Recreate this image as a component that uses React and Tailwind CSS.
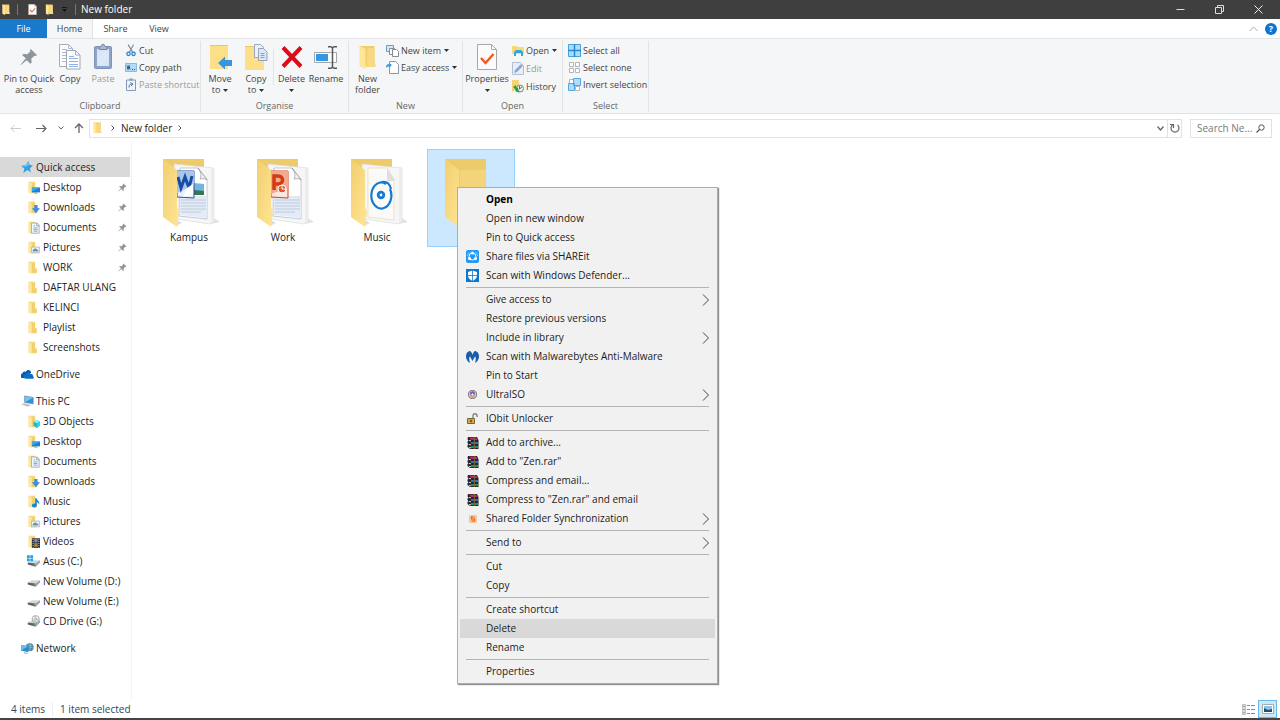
import React from "react";

const FOLDER_TABS = ["Home", "Share", "View"];

function Svg({ w, h, vb, children, className = "" }) {
  return (
    <svg width={w} height={h} viewBox={vb} fill="none" aria-hidden="true" className={`shrink-0 ${className}`}>
      {children}
    </svg>
  );
}

/* ---------- small icons, drawn on a 16 unit grid ---------- */

const folderBase = (
  <>
    <path d="M2 1h8v13H5L2 15z" fill="#f6d67a" />
    <path d="M2 1l4 2v13l-4-2z" fill="#fbe7a3" />
    <path d="M9 9h3v6H6V3h4z" fill="#f3cf6b" />
  </>
);

const overlays = {
  plain: null,
  desktop: (
    <>
      <path d="M6 8h10v6H6z" fill="#1583d8" />
      <path d="M6 8h10L6 13z" fill="#36a9ee" />
      <path d="M9 15h4" stroke="#67a8d6" />
    </>
  ),
  downloads: <path d="M9 5h4v4h3l-5 6-5-6h3z" fill="#3a8fdc" />,
  documents: (
    <>
      <path d="M5.500 2.500h7l2.500 2.500v10H5.500z" fill="#f5f8fb" stroke="#94a6b5" />
      <path d="M12 2.500V6h3M8 6h2M8 8.500h5M8 10.500h5M8 12.500h5" stroke="#6699c4" />
    </>
  ),
  pictures: (
    <>
      <path d="M5.500 7.500h10v7h-10z" fill="#eef4f8" stroke="#aab5bd" />
      <path d="M7 13v-2l3-2 4 2v2z" fill="#6895ae" />
    </>
  ),
  objects: (
    <>
      <path d="M12 6l4 2v5l-4 3-4-3V8z" fill="#18b8cf" />
      <path d="M12 6l4 2-4 2-4-2z" fill="#a2ecf2" />
      <path d="M12 10l4-2v5l-4 3z" fill="#35d2dd" />
    </>
  ),
  music: (
    <>
      <ellipse cx="9" cy="13" rx="3" ry="2.500" fill="#1389dc" />
      <path d="M10 13V4h2c0 3 4 3 3 8-1-2-2-3-3-3v4z" fill="#1389dc" />
    </>
  ),
  videos: (
    <>
      <path d="M6 4h10v12H6z" fill="#333" />
      <path d="M9 5h4v4H9z" fill="#6c8fca" />
      <path d="M9 10h4v5H9z" fill="#a68548" />
      <path d="M7.500 5v11M14.500 5v11" stroke="#eee" strokeDasharray="1 1.500" />
    </>
  ),
};

function FolderIcon({ kind = "plain" }) {
  return (
    <Svg w="13" h="13" vb="0 0 16 16">
      {folderBase}
      {overlays[kind]}
    </Svg>
  );
}

function DriveIcon({ kind }) {
  return (
    <Svg w="13" h="12" vb="0 0 18 16">
      <path d="M1 10l6-3h11l-6 4z" fill="#d5d7d8" />
      <path d="M1 10l11 1.500V16L1 13z" fill="#5d6265" />
      <path d="M12 11l6-4v3l-6 6z" fill="#9ea3a6" />
      <path d="M9 13.500h2" stroke="#7ee08a" />
      {kind === "windows" && <path d="M0 0h3.800v3.800H0zM4.600 0h3.800v3.800H4.600zM0 4.600h3.800v3.800H0zM4.600 4.600h3.800v3.800H4.600z" fill="#18a5e8" />}
      {kind === "cd" && (
        <>
          <circle cx="12" cy="5.500" r="5" fill="#d7dadc" stroke="#94999c" />
          <path d="M8 3l4 3 3-4" stroke="#fff" strokeWidth="1.500" />
          <circle cx="12" cy="5.500" r="1.500" fill="#fff" stroke="#888" />
        </>
      )}
    </Svg>
  );
}

const StarIcon = () => (
  <Svg w="12" h="12" vb="0 0 16 16">
    <path d="M10 0l1.500 5L16 6l-4 3.500 1 5.500-4.500-3L3 16l1.500-6L0 6.500l6-1z" fill="#319fe3" />
    <path d="M10 0l1.500 5-5 3-6.500-1.500 6-1z" fill="#68bff1" />
  </Svg>
);

const CloudIcon = () => (
  <Svg w="13" h="11" vb="0 0 18 14">
    <path d="M1 12a3.500 3.500 0 0 1 1-6.500C2 3 5 2 6.500 3.500 9-1 14 1 14 5L7 7l-2 5z" fill="#0b5cad" />
    <path d="M7 13a3 3 0 0 1-.5-6C7.500 3.500 12 3 13.500 6.500 16 6 17 8 16.500 9c2 1 1.500 4-.5 4z" fill="#0c6fc7" />
  </Svg>
);

const PcIcon = () => (
  <Svg w="13" h="12" vb="0 0 18 16">
    <path d="M5 1l12 2v9L5 10z" fill="#2c91d7" />
    <path d="M5 1l12 2L5 10z" fill="#75c3f0" />
    <path d="M5 1v9l12 2V3z" stroke="#7d9db5" />
    <path d="M0 12l5-1 9 3-5 2z" fill="#b7c4ce" />
  </Svg>
);

const NetworkIcon = () => (
  <Svg w="13" h="12" vb="0 0 18 16">
    <circle cx="12" cy="7" r="5.500" fill="#4787aa" />
    <path d="M9 3l4 2 3-1M12 7l5 1M13 2l-1 10" stroke="#92c9df" />
    <path d="M0 4l10 1.500V14L0 11.500z" fill="#278dd6" />
    <path d="M0 4l10 1.500L0 11.500z" fill="#69bcef" />
    <path d="M4 14.500l5 1" stroke="#89a7b7" strokeWidth="1.500" />
  </Svg>
);

function PinShape({ size }) {
  return (
    <Svg w={size} h={size} vb="0 0 20 20">
      <path d="M12 1l7 7-2 1-1-.5-3.500 3.500.5 4-1.500 1.500-4-4L1 19l-.5-.5 6-7-4-3.500L4 6.500l4 .5L11.500 4 11 2.500z" fill="#8c969c" />
    </Svg>
  );
}

/* ---------- ribbon icons ---------- */

const CheckDoc = ({ w, h }) => (
  <Svg w={w} h={h} vb="0 0 20 26">
    <path d="M.5.500h14l5 5v20H.500z" fill="#fbfbfc" stroke="#a5a8ac" />
    <path d="M14.500.500v5h5" stroke="#a5a8ac" />
    <path d="M4 14l4.500 5 8-9" stroke="#ef5a24" strokeWidth="2.500" />
  </Svg>
);

const CopyBig = () => (
  <Svg w="22" h="26" vb="0 0 22 26">
    <path d="M.500.500h9l4 4v18H.500z" fill="#fbfcfe" stroke="#a8adb3" />
    <path d="M9.500.500v4h4M3 5.500h5M3 8.500h8M3 11.500h8M3 14.500h8M3 17.500h8" stroke="#a9bddb" />
    <path d="M7.500 6.500h9l4.500 4.500v14H7.500z" fill="#fbfcfe" stroke="#a0a6ad" />
    <path d="M16.500 6.500v4.500H21M10 12.500h5M10 14.500h9M10 17.500h9M10 20.500h9M10 22.500h9" stroke="#90afe0" />
  </Svg>
);

const PasteBig = () => (
  <Svg w="18" h="26" vb="0 0 18 26">
    <rect x=".5" y="2.500" width="17" height="22" rx="1" fill="#8fa4c6" stroke="#7f95b8" />
    <path d="M3 5h12v17H3z" fill="#d9e6f8" />
    <path d="M5 2.500h2l1-2h2l1 2h2v3H5z" fill="#a9b8cd" stroke="#7689a5" />
    <path d="M4 18l8-10M6 20l9-11" stroke="#e8f0fb" />
  </Svg>
);

const ScissorsIcon = () => (
  <Svg w="10" h="13" vb="0 0 12 14">
    <path d="M2.500 0L8 9M9 0L4 9" stroke="#808b96" strokeWidth="1.400" />
    <circle cx="3" cy="11" r="2" stroke="#2482ca" strokeWidth="1.500" />
    <circle cx="9" cy="11" r="2" stroke="#2482ca" strokeWidth="1.500" />
  </Svg>
);

const CopyPathIcon = () => (
  <Svg w="12" h="9" vb="0 0 12 9">
    <path d="M.5.500h11v8H.500z" fill="#b5daf4" stroke="#8bbbdc" />
    <path d="M2 2.500l1 4 1-4 1 4M7 6.500h1M9 6.500h1" stroke="#205d91" />
  </Svg>
);

const PasteShortcutIcon = () => (
  <Svg w="10" h="13" vb="0 0 10 13">
    <path d="M.5 2h9v10.500h-9z" fill="#eef3fa" stroke="#8599b5" />
    <path d="M3 .500h4v2H3z" fill="#8ea2be" />
    <path d="M3 9.500c0-3 1-3.500 3.500-3.500M4.500 4.500L7 6 5 8" stroke="#5877a5" />
  </Svg>
);

const MoveIcon = () => (
  <Svg w="23" h="27" vb="0 0 23 27">
    <path d="M1 1h18v24H1z" fill="#fcdf86" />
    <path d="M1 1h18v1H1z" fill="#eac667" />
    <path d="M9 19l7-6.500V16h7v6h-7v3.500z" fill="#3596e3" />
  </Svg>
);

const CopyToIcon = () => (
  <Svg w="23" h="27" vb="0 0 23 27">
    <path d="M0 2h19v24H0z" fill="#fcdf86" />
    <path d="M0 2h10v1H0z" fill="#eac667" />
    <path d="M9.500.500h6l3 3v10h-9z" fill="#e9f1fb" stroke="#9aa9bd" />
    <path d="M13.500 4.500h5l3.500 3.500v8.500h-8.500z" fill="#dce8f8" stroke="#92a3b9" />
    <path d="M15.500 9.500h4M15.500 11.500h4M15.500 13.500h4" stroke="#7da4da" />
  </Svg>
);

const DeleteIcon = () => (
  <Svg w="22" h="22" vb="0 0 22 22">
    <path d="M2 1.500L20 20.500M20 1.500L2 20.500" stroke="#dc0d17" strokeWidth="4" />
  </Svg>
);

const RenameIcon = () => (
  <Svg w="24" h="23" vb="0 0 24 23">
    <path d="M.500 6.500h22v10H.500z" fill="#fff" stroke="#a1a6aa" />
    <path d="M2 8h12v7H2z" fill="#3297e5" />
    <path d="M14 .750h3l1.500 1 1.500-1h3M18.500 1.500v20M14 22.250h3l1.500-1 1.500 1h3" stroke="#56595c" strokeWidth="1.500" />
  </Svg>
);

const FolderTall = ({ w, h }) => (
  <Svg w={w} h={h} vb="0 0 16 24">
    <path d="M0 1h15v21H6z" fill="#f2cd69" />
    <path d="M0 1l6 3v20l-6-3z" fill="#fde59a" />
    <path d="M8 3h7v14l1 2v3H7z" fill="#f8d981" />
  </Svg>
);

const NewItemIcon = () => (
  <Svg w="13" h="13" vb="0 0 13 13">
    <path d="M.5 1.500h7v6h-7z" fill="#d3eafa" stroke="#6c9dc0" />
    <path d="M3.500 4.500h5v6h-5z" fill="#f6f8fa" stroke="#878e95" />
    <path d="M6.500 5.500h4l2 2v5h-6z" fill="#fff" stroke="#868d93" />
  </Svg>
);

const EasyIcon = () => (
  <Svg w="13" h="13" vb="0 0 13 13">
    <path d="M3.500.500h6l3 3v9h-9z" fill="#fff" stroke="#90969c" />
    <path d="M0 7c0-3 1-4 3-4V2l3 2-3 3V5.500C1.500 5.500 1 6 0 7z" fill="#4299d8" />
  </Svg>
);

const OpenIcon = () => (
  <Svg w="12" h="12" vb="0 0 12 12">
    <path d="M0 1h5l1 1h6v7H0z" fill="#f7d979" />
    <path d="M2 11V7l2-2h5l2 2v4H9V8H4v3z" fill="#32a6dc" />
  </Svg>
);

const EditIcon = () => (
  <Svg w="12" h="13" vb="0 0 12 13">
    <path d="M.5.500h8l3 3v9H.500z" fill="#e9eff8" stroke="#b4c0d1" />
    <path d="M2 11l1-3 6-6 2 2-6 6z" fill="#8ba8d2" />
  </Svg>
);

const HistoryIcon = () => (
  <Svg w="12" h="13" vb="0 0 12 13">
    <path d="M0 0h7v10H3L0 12z" fill="#f5d475" />
    <circle cx="8" cy="8.500" r="3.500" fill="#eee" stroke="#7c8790" />
    <path d="M7.500 6v3l2.500-2" stroke="#60676d" />
    <path d="M1 7l3-2v2c3 0 2 4 4 5-3 1-5-1-5-3z" fill="#20a447" />
  </Svg>
);

function SelectIcon({ kind }) {
  return (
    <Svg w="13" h="13" vb="0 0 13 13">
      {kind === "all" && (
        <>
          <path d="M.5.500h12v12H.500z" fill="#aedbfa" stroke="#45a2df" />
          <path d="M6.500 0v13M0 6.500h13" stroke="#288bd0" strokeWidth="1.500" />
        </>
      )}
      {kind === "none" && (
        <path d="M1.500 1.500h4v4h-4zM7.500 1.500h4v4h-4zM1.500 7.500h4v4h-4zM7.500 7.500h4v4h-4z" fill="#fff" stroke="#b1b5b8" />
      )}
      {kind === "invert" && (
        <>
          <path d="M1.500 1.500h4v4h-4zM7.500 8.500h4v4h-4z" fill="#fff" stroke="#b1b5b8" />
          <path d="M5.500.500h7v7h-7zM.500 5.500h6v7h-6z" fill="#aedbfa" stroke="#55a9e0" />
        </>
      )}
    </Svg>
  );
}

const Caret = () => (
  <Svg w="5" h="3" vb="0 0 5 3">
    <path d="M0 0h5L2.500 3z" fill="#333" />
  </Svg>
);

/* ---------- ribbon ---------- */

function BigButton({ icon, label, second, caret, dim, className = "" }) {
  return (
    <button type="button" className={`flex flex-col items-center text-[9px] leading-[12px] ${dim ? "text-[#9a9a9a]" : "text-[#444]"} ${className}`}>
      <span className="flex h-[32px] items-center justify-center">{icon}</span>
      <span className="whitespace-nowrap">{label}</span>
      <span className="flex h-[10px] items-center gap-[3px] whitespace-nowrap">
        {second}
        {caret && <Caret />}
      </span>
    </button>
  );
}

function SmallButton({ icon, label, caret, dim }) {
  return (
    <button type="button" className={`flex h-[17px] items-center gap-[2px] whitespace-nowrap text-[9px] leading-[11px] ${dim ? "text-[#9a9a9a]" : "text-[#444]"}`}>
      <span className="flex w-[13px] justify-center">{icon}</span>
      {label}
      {caret && <span className="pl-px"><Caret /></span>}
    </button>
  );
}

function Group({ name, width, children }) {
  return (
    <section aria-label={name} className={`flex flex-col border-r border-[#e2e3e4] ${width}`}>
      <div className="flex flex-1 items-start">{children}</div>
      <div className="text-center text-[9px] leading-[13px] text-[#666]">{name}</div>
    </section>
  );
}

function Ribbon() {
  return (
    <div className="flex h-[76px] border-y border-[#e2e3e4] bg-[#f5f6f7] pb-px pt-[2px]">
      <Group name="Clipboard" width="w-[201px]">
        <BigButton icon={<PinShape size="18" />} label="Pin to Quick" second="access" className="w-[58px]" />
        <BigButton icon={<CopyBig />} label="Copy" className="w-6" />
        <BigButton icon={<PasteBig />} label="Paste" dim className="w-[42px]" />
        <div className="flex flex-col pt-px">
          <SmallButton icon={<ScissorsIcon />} label="Cut" />
          <SmallButton icon={<CopyPathIcon />} label="Copy path" />
          <SmallButton icon={<PasteShortcutIcon />} label="Paste shortcut" dim />
        </div>
      </Group>
      <Group name="Organise" width="w-[148px]">
        <BigButton icon={<MoveIcon />} label="Move" second="to" caret className="w-[38px]" />
        <BigButton icon={<CopyToIcon />} label="Copy" second="to" caret className="w-[34px]" />
        <div className="mt-2 h-9 w-px bg-[#e2e3e4]" />
        <BigButton icon={<DeleteIcon />} label="Delete" caret className="w-[35px]" />
        <BigButton icon={<RenameIcon />} label="Rename" className="w-[34px]" />
      </Group>
      <Group name="New" width="w-[114px]">
        <BigButton icon={<FolderTall w="17" h="24" />} label="New" second="folder" className="w-[37px]" />
        <div className="flex flex-col pt-px">
          <SmallButton icon={<NewItemIcon />} label="New item" caret />
          <SmallButton icon={<EasyIcon />} label="Easy access" caret />
        </div>
      </Group>
      <Group name="Open" width="w-[100px]">
        <BigButton icon={<CheckDoc w="20" h="26" />} label="Properties" caret className="w-[48px]" />
        <div className="flex flex-col gap-px pt-px">
          <SmallButton icon={<OpenIcon />} label="Open" caret />
          <SmallButton icon={<EditIcon />} label="Edit" dim />
          <SmallButton icon={<HistoryIcon />} label="History" />
        </div>
      </Group>
      <Group name="Select" width="w-[86px]">
        <div className="flex flex-col pl-[5px] pt-px">
          <SmallButton icon={<SelectIcon kind="all" />} label="Select all" />
          <SmallButton icon={<SelectIcon kind="none" />} label="Select none" />
          <SmallButton icon={<SelectIcon kind="invert" />} label="Invert selection" />
        </div>
      </Group>
    </div>
  );
}

/* ---------- title bar, tabs, address ---------- */

function TitleBar() {
  return (
    <header className="flex h-[19px] items-center bg-[#3f3f3f] pl-[2px] text-white">
      <FolderTall w="8" h="11" />
      <span className="ml-[7px] h-[11px] w-px bg-[#777]" />
      <span className="ml-[10px] flex"><CheckDoc w="9" h="11" /></span>
      <span className="ml-[8px] flex"><FolderTall w="9" h="11" /></span>
      <button type="button" aria-label="Customise toolbar" className="ml-[8px]">
        <Svg w="5" h="5" vb="0 0 5 5"><path d="M0 .500h5" stroke="#161616" /><path d="M0 2h5L2.500 5z" fill="#161616" /></Svg>
      </button>
      <span className="ml-[8px] h-[11px] w-px bg-[#777]" />
      <h1 className="ml-[5px] flex-1 text-[10px] leading-[15px]">New folder</h1>
      <div className="flex pr-[2px]">
        <button type="button" aria-label="Minimise" className="flex h-[19px] w-[39px] items-center justify-center">
          <Svg w="9" h="9" vb="0 0 9 9"><path d="M.5 4.500h8" stroke="#ddd" /></Svg>
        </button>
        <button type="button" aria-label="Restore" className="flex h-[19px] w-[39px] items-center justify-center">
          <Svg w="9" h="9" vb="0 0 9 9"><path d="M.5 2.500h6v6h-6zM2.500 2V.500h6v6H7" stroke="#ddd" /></Svg>
        </button>
        <button type="button" aria-label="Close" className="flex h-[19px] w-[39px] items-center justify-center">
          <Svg w="9" h="9" vb="0 0 9 9"><path d="M.5.500l8 8M8.500.500l-8 8" stroke="#eee" /></Svg>
        </button>
      </div>
    </header>
  );
}

function Tabs() {
  return (
    <nav className="flex h-[19px] text-[9px] leading-[19px] text-[#444]">
      <button type="button" className="w-[47px] bg-[#1979ca] text-white">File</button>
      {FOLDER_TABS.map((t) => (
        <button key={t} type="button" className={t === "Home" ? "w-[46px] border-r border-[#e2e3e4] bg-[#f5f6f7]" : t === "Share" ? "w-[45px]" : "w-[42px]"}>
          {t}
        </button>
      ))}
      <div className="flex flex-1 items-center justify-end gap-[7px] pr-[3px]">
        <button type="button" aria-label="Collapse ribbon">
          <Svg w="9" h="6" vb="0 0 9 6"><path d="M.5 5l4-4 4 4" stroke="#aaa" /></Svg>
        </button>
        <button type="button" aria-label="Help" className="flex size-3 items-center justify-center rounded-full bg-[#0b76d1] text-[9px] font-bold leading-3 text-white">?</button>
      </div>
    </nav>
  );
}

const ChevronRight = () => (
  <Svg w="4" h="6" vb="0 0 4 6"><path d="M.5.500L3 3 .5 5.500" stroke="#555" /></Svg>
);

function AddressBar() {
  return (
    <div className="flex h-7 items-center pr-2">
      <div className="flex w-[89px] items-center pl-[10px]">
        <button type="button" aria-label="Back"><Svg w="11" h="9" vb="0 0 11 9"><path d="M11 4.500H1M4.500 1L1 4.500 4.500 8" stroke="#ccc" /></Svg></button>
        <button type="button" aria-label="Forward" className="ml-[15px]"><Svg w="11" h="9" vb="0 0 11 9"><path d="M0 4.500h10M6.500 1L10 4.500 6.500 8" stroke="#666" strokeWidth="1.200" /></Svg></button>
        <button type="button" aria-label="Recent locations" className="ml-[11px]"><Svg w="6" h="4" vb="0 0 6 4"><path d="M.5.500L3 3 5.500.500" stroke="#666" /></Svg></button>
        <button type="button" aria-label="Up" className="ml-[10px]"><Svg w="10" h="10" vb="0 0 10 10"><path d="M5 10V1M1 5l4-4 4 4" stroke="#666" strokeWidth="1.300" /></Svg></button>
      </div>
      <div className="flex h-[19px] flex-1 items-center border border-[#e2e2e2] pl-[3px] text-[10px] leading-[15px] text-[#222]">
        <FolderTall w="9" h="12" />
        <span className="ml-[9px]"><ChevronRight /></span>
        <span className="ml-[6px] mr-[6px]">New folder</span>
        <ChevronRight />
        <button type="button" aria-label="Previous locations" className="ml-auto mr-[3px]"><Svg w="7" h="5" vb="0 0 7 5"><path d="M.5.500l3 3.500 3-3.500" stroke="#666" strokeWidth="1.300" /></Svg></button>
        <button type="button" aria-label="Refresh" className="flex h-full w-[14px] items-center justify-center border-l border-[#e2e2e2]">
          <Svg w="10" h="11" vb="0 0 10 11"><path d="M2.500 2a4 4 0 1 0 5 0M0 1.500h3.500V5" stroke="#666" strokeWidth="1.200" /></Svg>
        </button>
      </div>
      <label className="ml-2 flex h-[19px] w-[82px] items-center border border-[#e2e2e2] pl-[6px] pr-[6px]">
        <input aria-label="Search New folder" placeholder="Search Ne..." className="w-0 flex-1 bg-transparent text-[10px] leading-[15px] outline-none placeholder:text-[#777]" />
        <Svg w="9" h="9" vb="0 0 9 9"><circle cx="5.500" cy="3.500" r="2.700" stroke="#555" /><path d="M3.500 5.500L.5 8.500" stroke="#555" strokeWidth="1.300" /></Svg>
      </label>
    </div>
  );
}

/* ---------- navigation pane ---------- */

const NAV = [
  {
    label: "Quick access", icon: <StarIcon />, active: true,
    items: [
      ["Desktop", "desktop", true], ["Downloads", "downloads", true], ["Documents", "documents", true],
      ["Pictures", "pictures", true], ["WORK", "plain", true], ["DAFTAR ULANG", "plain"],
      ["KELINCI", "plain"], ["Playlist", "plain"], ["Screenshots", "plain"],
    ],
  },
  { label: "OneDrive", icon: <CloudIcon />, items: [] },
  {
    label: "This PC", icon: <PcIcon />,
    items: [
      ["3D Objects", "objects"], ["Desktop", "desktop"], ["Documents", "documents"], ["Downloads", "downloads"],
      ["Music", "music"], ["Pictures", "pictures"], ["Videos", "videos"], ["Asus (C:)", "drive-windows"],
      ["New Volume (D:)", "drive-plain"], ["New Volume (E:)", "drive-plain"], ["CD Drive (G:)", "drive-cd"],
    ],
  },
  { label: "Network", icon: <NetworkIcon />, items: [] },
];

function NavPane() {
  return (
    <nav aria-label="Folders" className="flex w-[132px] shrink-0 flex-col gap-[7px] border-r border-[#f3f3f3] pt-[15px] text-[10px] leading-[20px] text-[#222]">
      {NAV.map((g) => (
        <div key={g.label}>
          <a href="#" className={`mr-[1px] flex h-5 items-center pl-[21px] ${g.active ? "bg-[#d9d9d9]" : ""}`}>
            <span className="flex w-[15px] items-center">{g.icon}</span>
            {g.label}
          </a>
          {g.items.map(([label, kind, pinned]) => (
            <a key={label} href="#" className="flex h-5 items-center whitespace-nowrap pl-[27px]">
              <span className="flex w-[16px] items-center">
                {kind.startsWith("drive-") ? <DriveIcon kind={kind.slice(6)} /> : <FolderIcon kind={kind} />}
              </span>
              {label}
              {pinned && <span className="ml-auto mr-1"><PinShape size="9" /></span>}
            </a>
          ))}
        </div>
      ))}
    </nav>
  );
}

/* ---------- folder tiles ---------- */

const page = (
  <>
    <path d="M47 65l10-2-6-4z" fill="#e2e2e2" />
    <path d="M11 5l40 4v54l-4 2-34-5z" fill="#f6f6f6" stroke="#ddd" strokeWidth=".7" />
    <path d="M49 9v55" stroke="#e0e0e0" strokeWidth=".8" />
  </>
);

const textPage = (
  <>
    <path d="M17 9h18l9 11v40l-28-3z" fill="#fff" stroke="#b5bdca" strokeWidth=".8" />
    <path d="M17 39h27v20l-27-3z" fill="#e3ebf7" />
    <path d="M35 9c4 5 3 9 2 11 4-1 6 0 7 1z" fill="#f3f3f3" stroke="#999" strokeWidth=".7" />
    <path d="M18 38h25M18 41h25M18 44h25M18 47h25M18 50h25M18 53h20" stroke="#aebbd0" strokeWidth=".7" />
  </>
);

const contents = {
  Kampus: (
    <>
      {page}
      {textPage}
      <path d="M31 24l10 1v11H31z" fill="#6fb7dd" />
      <path d="M31 31l10 1v4H31z" fill="#39734f" />
      <path d="M14 12h17v27l-17-1z" fill="#e8effb" stroke="#2854a0" />
      <path d="M14 12h17v14L14 34z" fill="#a9c6ea" />
      <path d="M15 18l3 11 4-11 4 11 3-12" stroke="#174da6" strokeWidth="3" />
      <path d="M24 29l6-4v11l-10 2z" fill="#fff" />
    </>
  ),
  Work: (
    <>
      {page}
      {textPage}
      <path d="M14 12h17v27l-17-1z" fill="#fbe6de" stroke="#cf431c" />
      <path d="M14 12h17v17L14 35z" fill="#f3a98e" />
      <path d="M17 31V17h4c6 0 6 8 0 8h-4" stroke="#cf3d13" strokeWidth="3.500" />
      <circle cx="25" cy="30" r="4" fill="#e4572b" stroke="#fff" />
      <path d="M25 30v-4M25 30h4" stroke="#fff" />
    </>
  ),
  Music: (
    <>
      {page}
      <path d="M17 9h19l7 11v41l-26-3z" fill="#fafafa" stroke="#eadba7" strokeWidth=".7" />
      <path d="M36 9v13h8z" fill="#dedede" />
      <path d="M35 25a10 13 0 1 0 4 5M31 23c5-1 8 2 9 7" stroke="#1479d0" strokeWidth="2.200" />
      <circle cx="30" cy="36" r="2.800" stroke="#1479d0" strokeWidth="2.800" />
    </>
  ),
};

function BigFolder({ name }) {
  return (
    <Svg w="56" h="69" vb="0 0 56 69">
      <defs>
        <linearGradient id={`front-${name || "zen"}`} x1="0" y1="0" x2="1" y2="1">
          <stop stopColor="#f2cf70" />
          <stop offset="1" stopColor="#ffe594" />
        </linearGradient>
      </defs>
      <path d="M0 0h41v55H8z" fill="#edcb6a" />
      {contents[name]}
      {contents[name] && <path d="M13 67l6-3-5-3z" fill="#ddd" />}
      <path d="M0 0l14 11v38l2 3-2 16L0 58z" fill={`url(#front-${name || "zen"})`} />
      {!name && <path d="M15 11h26v50H15z" fill="#f4d47a" />}
    </Svg>
  );
}

function Tile({ name, selected }) {
  return (
    <button type="button" aria-label={name || "Zen"} className={`flex h-[98px] w-[88px] flex-col items-center border pt-[9px] text-[10px] leading-[14px] text-[#222] ${selected ? "border-[#99d1ff] bg-[#cce8ff]" : "border-transparent"}`}>
      <span className="flex pl-1"><BigFolder name={name} /></span>
      <span className="mt-[2px]">{name}</span>
    </button>
  );
}

/* ---------- context menu ---------- */

const ShareitIcon = () => (
  <Svg w="13" h="13" vb="0 0 13 13">
    <rect width="13" height="13" rx="2" fill="#2498f5" />
    <circle cx="6.500" cy="6.500" r="3.500" stroke="#fff" />
    <circle cx="6.500" cy="3" r="1.500" fill="#fff" />
    <circle cx="3.500" cy="8.500" r="1.500" fill="#fff" />
    <circle cx="9.500" cy="8.500" r="1.500" fill="#fff" />
    <path d="M1.500 6a5 5 0 0 1 2-4M11.500 6a5 5 0 0 0-2-4" stroke="#a8d8ff" strokeWidth=".7" />
  </Svg>
);
const DefenderIcon = () => (
  <Svg w="13" h="13" vb="0 0 13 13">
    <path d="M0 0h13v13H0z" fill="#0b78d0" />
    <path d="M6.500 1.500L11 3v3.500c0 2.500-2 4.500-4.500 5.500C4 11 2 9 2 6.500V3z" fill="#fff" />
    <path d="M6.500 1v11M2 6.500h9" stroke="#0b78d0" strokeWidth=".8" />
  </Svg>
);
const MalwareIcon = () => (
  <Svg w="13" h="12" vb="0 0 13 12">
    <path d="M3.500 0C0 1-1 6 1 9c1 2 2 2.500 3 3C3 9 3 6 4 5.500L6.500 10 9 5.500c1 .5 1 3.500 0 6.500 1-.5 2-1 3-3 2-3 1-8-2.500-9C8 0 7 2 6.500 4 6 2 5 0 3.500 0z" fill="#1c5daa" />
  </Svg>
);
const DiscIcon = () => (
  <Svg w="9" h="9" vb="0 0 10 10">
    <circle cx="5" cy="5" r="4.500" fill="#d5c9cc" stroke="#73646d" />
    <path d="M2 3l3-2 3 2-1 3H3z" fill="#6d67b0" />
    <path d="M2 7l6 0-3 2z" fill="#d89553" />
    <circle cx="5" cy="5" r="1.200" fill="#fff" />
  </Svg>
);
const UnlockIcon = () => (
  <Svg w="11" h="11" vb="0 0 11 11">
    <path d="M6 5V3c0-3 4-3 4 0v1" stroke="#878b8f" strokeWidth="1.500" />
    <path d="M.5 5.500h7v5h-7z" fill="#deb34d" stroke="#7e612a" />
    <path d="M4 6.500v3M2.500 8h3" stroke="#60451a" />
  </Svg>
);
const RarIcon = () => (
  <Svg w="12" h="12" vb="0 0 12 12">
    <path d="M1 0h9l1.500 3v9H3L.5 10V8l1-.5L.5 6V4.500l1-.5L.5 2z" fill="#23242c" />
    <path d="M2 .5h7l2 2.500H4z" fill="#c02078" />
    <path d="M4 5h7v2H4z" fill="#2c72c4" />
    <path d="M4 9h7v2H4z" fill="#1a9a58" />
    <path d="M2 3.500l2 .3M2 7.500l2 .3M2 10.500l2 .3" stroke="#f0e8e8" strokeWidth=".9" />
    <path d="M7.500 0v12" stroke="#7d5f2c" strokeWidth="1.200" />
  </Svg>
);
const SyncIcon = () => (
  <Svg w="8" h="8" vb="0 0 8 8">
    <rect width="8" height="8" rx="1" fill="#fac79a" />
    <path d="M5.500 2h-3v2h3v2h-3" stroke="#e2641c" strokeWidth="1.200" />
  </Svg>
);

const MENU = [
  [["Open", null, "bold"], ["Open in new window"], ["Pin to Quick access"], ["Share files via SHAREit", <ShareitIcon />], ["Scan with Windows Defender...", <DefenderIcon />]],
  [["Give access to", null, "sub"], ["Restore previous versions"], ["Include in library", null, "sub"], ["Scan with Malwarebytes Anti-Malware", <MalwareIcon />], ["Pin to Start"], ["UltraISO", <DiscIcon />, "sub"]],
  [["IObit Unlocker", <UnlockIcon />]],
  [["Add to archive...", <RarIcon />], ['Add to "Zen.rar"', <RarIcon />], ["Compress and email...", <RarIcon />], ['Compress to "Zen.rar" and email', <RarIcon />], ["Shared Folder Synchronization", <SyncIcon />, "sub"]],
  [["Send to", null, "sub"]],
  [["Cut"], ["Copy"]],
  [["Create shortcut"], ["Delete", null, "active"], ["Rename"]],
  [["Properties"]],
];

function ContextMenu() {
  return (
    <div role="menu" className="absolute left-[457px] top-[45px] w-[261px] border border-[#adadad] bg-[#f1f1f1] px-[2px] py-[2px] text-[10px] leading-[19px] text-[#1c1c1c] shadow-[1px_1px_1px_#8f8f8f]">
      {MENU.map((group, i) => (
        <div key={i}>
          {i > 0 && <div role="separator" className="mx-[6px] my-[2px] h-px bg-[#b4b4b4]" />}
          {group.map(([label, icon, flag]) => (
            <button key={label} type="button" role="menuitem" className={`flex h-[19px] w-full items-center pl-[5px] pr-[5px] text-left ${flag === "active" ? "bg-[#d9d9d9]" : ""} ${flag === "bold" ? "font-bold text-black" : ""}`}>
              <span className="mr-[6px] flex w-[15px] justify-center">{icon}</span>
              <span className="flex-1 whitespace-nowrap">{label}</span>
              {flag === "sub" && <Svg w="8" h="12" vb="0 0 8 12"><path d="M1 .500L6.500 6 1 11.500" stroke="#444" /></Svg>}
            </button>
          ))}
        </div>
      ))}
    </div>
  );
}

function StatusBar() {
  return (
    <footer className="flex h-5 shrink-0 items-center border-b-2 border-[#444] pl-[11px] text-[10px] leading-[15px] text-[#2b4562]">
      <span className="border-r border-[#eee] pr-[7px]">4 items</span>
      <span className="pl-[7px]">1 item selected</span>
      <div className="ml-auto flex h-full items-center pr-[3px]">
        <button type="button" aria-label="Details view" className="mr-[3px]">
          <Svg w="13" h="11" vb="0 0 13 11">
            <path d="M.5.500h3v10h-3z" fill="#ddd" stroke="#aaa" strokeWidth=".7" />
            <path d="M1.500 2.500h1M1.500 5.500h1" stroke="#557" />
            <path d="M1.500 8.500h1" stroke="#c44" />
            <path d="M5 1.500h3M9 1.500h4M5 5.500h3M9 5.500h4M5 9.500h3M9 9.500h4" stroke="#888" />
          </Svg>
        </button>
        <button type="button" aria-label="Thumbnail view" className="flex h-full w-[19px] items-center justify-center border border-[#66bce9] bg-[#cce8f8]">
          <Svg w="12" h="10" vb="0 0 12 10">
            <path d="M.5.500h11v9H.500z" fill="#fff" stroke="#aaa" />
            <path d="M2 2h8v6H2z" fill="#8fc4ea" />
            <path d="M2 4l4 2 4-1v3H2z" fill="#1d5566" />
          </Svg>
        </button>
      </div>
    </footer>
  );
}

export default function App() {
  return (
    <div className="flex min-h-screen flex-col bg-white font-['Open_Sans','Noto_Sans',sans-serif]">
      <TitleBar />
      <Tabs />
      <Ribbon />
      <AddressBar />
      <main className="relative flex flex-1">
        <NavPane />
        <div className="flex flex-1 flex-wrap content-start gap-[6px] pl-[13px] pt-[7px]">
          <Tile name="Kampus" />
          <Tile name="Work" />
          <Tile name="Music" />
          <Tile selected />
        </div>
        <ContextMenu />
      </main>
      <StatusBar />
    </div>
  );
}
